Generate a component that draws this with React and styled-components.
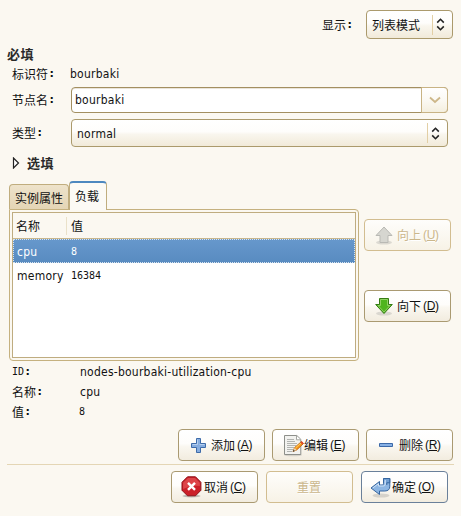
import React from "react";
import styled, { createGlobalStyle, css } from "styled-components";

const Global = createGlobalStyle`
  * { box-sizing: border-box; }
  body { margin: 0; background: #fbf8f1; }
`;

const cjk = css`font-family: "Noto Sans CJK SC", sans-serif; font-size: 12px;`;
const latin = css`font-family: "DejaVu Sans Condensed", "DejaVu Sans", sans-serif; font-stretch: condensed; font-size: 12px; letter-spacing: 0.24px;`;

const Dialog = styled.main`
  width: 461px;
  height: 516px;
  overflow: hidden;
  background: #fbf8f1;
  color: #111;
  display: flex;
  flex-direction: column;
  white-space: nowrap;
  ${cjk}
  line-height: 20px;
`;
const TopBar = styled.header`
  height: 29px;
  margin: 10px 8px 0 0;
  display: flex;
  justify-content: flex-end;
  align-items: center;
`;
const Label = styled.span`
  flex: none;
  width: ${(p) => p.$w}px;
  display: flex;
`;
const Colon = styled.span`
  font-family: "DejaVu Sans", sans-serif;
  font-weight: bold;
  font-size: 11px;
  margin-left: 1.5px;
`;
const Heading = styled.h2`
  margin: ${(p) => p.$m};
  height: 20px;
  line-height: 18px;
  font-size: 13px;
  letter-spacing: 0.6px;
  font-weight: 700;
  color: #2a2a2a;
  display: flex;
  align-items: center;
`;
const Disclosure = styled.svg`
  width: 8px;
  height: 12px;
  margin-right: 7px;
`;
const FormRow = styled.div`
  display: flex;
  align-items: center;
  height: ${(p) => p.$h}px;
  margin: ${(p) => p.$mt || 0}px 13px 0 12px;
`;
const Latin = styled.span`
  ${latin}
`;
const Digits = styled.span`
  font-family: "DejaVu Sans Mono", monospace;
  font-size: 10px;
`;
const Select = styled.div`
  width: ${(p) => p.$w}px;
  height: ${(p) => p.$h}px;
  padding: 0 7px 0 5px;
  border: 1px solid #ab9a6c;
  border-radius: 4px;
  background: linear-gradient(#fff, #fefdfb 45%, #f9f6ee 55%, #f1ead9);
  display: flex;
  align-items: center;
`;
const SelectText = styled.span`
  flex: 1;
`;
const SelectRule = styled.i`
  width: 1px;
  height: 20px;
  background: #e2cfa5;
  margin-right: 3px;
`;
const Arrows = styled.svg`
  width: 9px;
  height: 13px;
`;
const Entry = styled.div`
  width: 377px;
  height: 26px;
  border: 1px solid #a38f60;
  border-radius: 4px;
  background: #fff;
  box-shadow: inset 0 1px #e9e4da;
  display: flex;
  align-items: center;
  padding-left: 3px;
`;
const EntryText = styled(Latin)`
  flex: 1;
`;
const EntryButton = styled.div`
  width: 27px;
  height: 26px;
  margin-right: -1px;
  border: 1px solid #c8b384;
  border-radius: 0 4px 4px 0;
  background: linear-gradient(#fff, #fbf9f3 50%, #f4efdf);
  display: flex;
  align-items: center;
  justify-content: center;
`;
const Work = styled.section`
  display: flex;
  height: 180px;
  margin: 8px 10px 0 9px;
`;
const Notebook = styled.div`
  width: 350px;
`;
const Tabs = styled.div`
  height: 28px;
  display: flex;
  align-items: flex-end;
`;
const Tab = styled.div`
  border: 1px solid #c0ad7e;
  border-bottom: 0;
  border-radius: 4px 4px 0 0;
  height: 25px;
  width: 60px;
  padding-left: 5px;
  line-height: 25px;
  background: linear-gradient(#eee3cb, #e4d5b5);
  ${(p) => p.$active && css`
    height: 29px;
    width: 38px;
    margin-bottom: -1px;
    line-height: 25px;
    border-top: 2px solid #4d88c0;
    background: #fcfaf5;
    z-index: 1;
  `}
`;
const Pane = styled.div`
  height: 152px;
  border: 1px solid #c5b17f;
  border-radius: 0 4px 4px 4px;
  padding: 2px;
  background: #fbf8f1;
`;
const Tree = styled.div`
  height: 146px;
  border: 1px solid #bfac80;
  background: #fff;
`;
const TreeRow = styled.div`
  height: 24px;
  display: grid;
  grid-template-columns: 53px 1fr;
  align-items: center;
  padding: 1px 0 0 4px;
  column-gap: 1px;
  ${(p) => p.$selected && css`
    color: #fff;
    background: linear-gradient(#6798cc, #588bc0);
    outline: 1px dotted #d8e4ef;
    outline-offset: -1px;
  `}
`;
const TreeHead = styled(TreeRow)`
  height: 26px;
  padding: 0 0 0 3px;
  column-gap: 0;
  background: #fbf8f1;
  border-bottom: 1px solid #c9b78d;
`;
const HeadCell = styled.span`
  height: 18px;
  line-height: 18px;
  padding-left: ${(p) => (p.$ruled ? 4 : 0)}px;
  margin-left: ${(p) => (p.$ruled ? -3 : 0)}px;
  border-left: ${(p) => (p.$ruled ? "1px solid #eae1c9" : "0")};
`;
const SideButtons = styled.div`
  margin: 38px 0 0 5px;
  display: flex;
  flex-direction: column;
  gap: 39px;
`;
const Details = styled.dl`
  margin: 0 0 0 12px;
  padding-top: 1px;
  height: 68px;
`;
const Detail = styled.div`
  height: 20px;
  display: flex;
  align-items: center;
`;
const ButtonRow = styled.footer`
  display: flex;
  justify-content: flex-end;
  gap: ${(p) => p.$gap}px;
  margin-right: ${(p) => p.$right}px;
`;
const Rule = styled.hr`
  margin: 3px 7px 6px;
  border: 0;
  height: 1px;
  flex: none;
  background: #e4d6b5;
`;
const Button = styled.button`
  width: 87px;
  height: 32px;
  padding: 0 0 0 ${(p) => p.$pad}px;
  border: 1px solid ${(p) => (p.$primary ? "#6a809a" : p.$disabled ? "#d2bd90" : "#aa9a71")};
  border-radius: 4px;
  background: linear-gradient(#fff, #fefdfb 45%, #faf7f0 55%, #f2ecdf);
  color: ${(p) => (p.$disabled ? "#cbb78c" : "#111")};
  ${(p) => p.$disabled && css`
    background: linear-gradient(#fefdfb, #faf7ef 60%, #f7f2e6);
    text-shadow: 1px 1px #fff;
  `}
  ${cjk}
  display: flex;
  align-items: center;
`;
const Caption = styled.span`
  margin: -1px 0 0 ${(p) => p.$gap}px;
`;
const Key = styled.span`
  font-family: "Liberation Sans", sans-serif;
  font-size: 12px;
  letter-spacing: -0.3px;
  margin-left: 2px;
  u { text-underline-offset: 1px; text-decoration-thickness: 1px; }
`;
const Icon = styled.svg`
  flex: none;
  width: ${(p) => p.$w}px;
  height: ${(p) => p.$h || p.$w}px;
`;

const UpDown = () => (
  <Arrows viewBox="0 0 9 13" fill="none" stroke="#222" strokeWidth="1.6">
    <path d="M1.2 4.6 4.5 1.3l3.3 3.3M1.2 8.4l3.3 3.3 3.3-3.3" />
  </Arrows>
);

const ArrowIcon = ({ up }) => (
  <Icon $w={18} $h={19} viewBox="0 0 18 19">
    <ellipse cx="9" cy="16.5" rx="8" ry="2" fill="#777" opacity=".22" />
    {up ? (
      <path d="M9 1 17 9.5H13V16.5H5V9.5H1Z" fill="#d6d6d0" stroke="#b9b9b4" />
    ) : (
      <>
        <path d="M4.500 1.500h9v6h3.800L9 16.500.7 7.500h3.800Z" fill="#4fb51d" stroke="#357c13" />
        <path d="M5.500 2.500h7v6h2.500L9 15 3 8.500h2.500Z" fill="none" stroke="#8fd162" />
      </>
    )}
  </Icon>
);
const AddIcon = () => (
  <Icon $w={15} viewBox="0 0 15 15">
    <path d="M5.500.500h4v5h5v4h-5v5h-4v-5h-5v-4h5Z" fill="#86ade0" stroke="#3e6ba9" />
    <path d="M6.500 1.500v5h-5M8.500 6.500h5" fill="none" stroke="#b5cfef" />
  </Icon>
);
const RemoveIcon = () => (
  <Icon $w={15} $h={5} viewBox="0 0 15 5">
    <path d="M.500.500h13v3H.500Z" fill="#87b0e4" stroke="#3c69a8" />
  </Icon>
);
const EditIcon = () => (
  <Icon $w={21} $h={23} viewBox="0 0 21 23">
    <ellipse cx="10" cy="21" rx="9" ry="1.3" fill="#777" opacity=".25" />
    <path d="M1.500 1.500h12.300l4 3.800v15.200H1.500Z" fill="#f2f2ef" stroke="#8d8f8a" />
    <path d="M13.500 2v3.800h4" fill="#fff" stroke="#a5a7a2" />
    <path d="M4 5.500h7M4 7.500h8M4 9.500h10M4 11.500h9M4 13.500h7M4 15.500h6M4 17.500h5" stroke="#b2b4b1" />
    <path d="m10 17.500 1.500-3.800 7-6.200 2 2-6.800 6.400Z" fill="#f6981d" stroke="#bd5f0c" strokeWidth=".9" />
    <path d="m12.500 14 6-5.500" stroke="#ffd35a" />
    <path d="m10 17.500 1.500-3.500 2.200 2Z" fill="#ead6ad" />
    <path d="m9.700 17.800 1-2 1.200 1.100Z" fill="#333" />
    <path d="m17.300 8.500 1.600-1.300 1.800 2-1.400 1.200Z" fill="#df4a2f" />
  </Icon>
);
const CancelIcon = () => (
  <Icon $w={21} $h={22} viewBox="0 0 21 22">
    <ellipse cx="10.5" cy="20" rx="9" ry="1.5" fill="#555" opacity=".35" />
    <path d="M6.500.800h8l5.400 5.500v8l-5.400 5.500h-8L1 14.300v-8Z" fill="#cb2029" stroke="#8e1119" />
    <path d="M7 1.900h7l4.800 4.800v3.400Q10 9 2.100 13V6.700Z" fill="#e45557" opacity=".7" />
    <path d="m7 6.800 7 7m0-7-7 7" stroke="#fff" strokeWidth="2.400" />
  </Icon>
);
const OkIcon = () => (
  <Icon $w={21} $h={21} viewBox="0 0 21 21">
    <ellipse cx="11" cy="18.500" rx="8.500" ry="2" fill="#666" opacity=".22" />
    <path d="M13.500 1.500h6.300v7.700q0 4.800-5 4.800H9.500v3.500L1 11l8.500-6.500V8h2.800q1.200 0 1.200-1.200Z" fill="#8db6e3" stroke="#35659f" />
    <path d="M13.500 1.500h6.300v4.300h-3V8" fill="#719fd3" stroke="#35659f" />
    <path d="M8.500 6.700V9h5q1.800 0 1.800-2V3M2.800 11l5.700-4.300" fill="none" stroke="#cfe1f5" />
  </Icon>
);

const FieldLabel = ({ w, children }) => (
  <Label $w={w}>{children}<Colon>:</Colon></Label>
);
const ActionButton = ({ icon, pad, gap = 0, text, hotkey, ...rest }) => (
  <Button type="button" $pad={pad} {...rest}>
    {icon}
    <Caption $gap={gap}>{text}</Caption>
    {hotkey && <Key>(<u>{hotkey}</u>)</Key>}
  </Button>
);

export default function App() {
  return (
    <>
      <Global />
      <Dialog>
        <TopBar>
          <FieldLabel w={44}>显示</FieldLabel>
          <Select $w={87} $h={29}>
            <SelectText>列表模式</SelectText><SelectRule /><UpDown />
          </Select>
        </TopBar>
        <Heading $m="5px 0 0 7px">必填</Heading>
        <FormRow $h={20}>
          <FieldLabel w={58}>标识符</FieldLabel><Latin>bourbaki</Latin>
        </FormRow>
        <FormRow $h={26} $mt={3}>
          <FieldLabel w={59}>节点名</FieldLabel>
          <Entry>
            <EntryText>bourbaki</EntryText>
            <EntryButton>
              <Icon $w={12} $h={8} viewBox="0 0 12 8">
                <path d="m1 1.500 5 4.500 5-4.500" fill="none" stroke="#cdb789" strokeWidth="1.800" />
              </Icon>
            </EntryButton>
          </Entry>
        </FormRow>
        <FormRow $h={28} $mt={6}>
          <FieldLabel w={59}>类型</FieldLabel>
          <Select $w={377} $h={28}>
            <SelectText><Latin>normal</Latin></SelectText><SelectRule /><UpDown />
          </Select>
        </FormRow>
        <Heading $m="6px 0 0 12px">
          <Disclosure viewBox="0 0 8 12">
            <path d="M1.500 1v10L6.500 6Z" fill="#fff" stroke="#222" strokeWidth="1.200" />
          </Disclosure>
          选填
        </Heading>
        <Work>
          <Notebook>
            <Tabs>
              <Tab>实例属性</Tab>
              <Tab $active>负载</Tab>
            </Tabs>
            <Pane>
              <Tree>
                <TreeHead><HeadCell>名称</HeadCell><HeadCell $ruled>值</HeadCell></TreeHead>
                <TreeRow $selected><Latin>cpu</Latin><Digits>8</Digits></TreeRow>
                <TreeRow><Latin>memory</Latin><Digits>16384</Digits></TreeRow>
              </Tree>
            </Pane>
          </Notebook>
          <SideButtons>
            <ActionButton icon={<ArrowIcon up />} pad={10} gap={4} text="向上" hotkey="U" $disabled />
            <ActionButton icon={<ArrowIcon />} pad={10} gap={4} text="向下" hotkey="D" />
          </SideButtons>
        </Work>
        <Details>
          <Detail><Label $w={68}><Digits>ID</Digits><Colon>:</Colon></Label><Latin>nodes-bourbaki-utilization-cpu</Latin></Detail>
          <Detail><FieldLabel w={68}>名称</FieldLabel><Latin>cpu</Latin></Detail>
          <Detail><FieldLabel w={67}>值</FieldLabel><Digits>8</Digits></Detail>
        </Details>
        <ButtonRow $gap={7} $right={8}>
          <ActionButton icon={<AddIcon />} pad={12} gap={5} text="添加" hotkey="A" />
          <ActionButton icon={<EditIcon />} pad={10} text="编辑" hotkey="E" />
          <ActionButton icon={<RemoveIcon />} pad={12} gap={5} text="删除" hotkey="R" />
        </ButtonRow>
        <Rule />
        <ButtonRow $gap={8} $right={13}>
          <ActionButton icon={<CancelIcon />} pad={9} gap={2} text="取消" hotkey="C" />
          <ActionButton pad={30} text="重置" $disabled />
          <ActionButton icon={<OkIcon />} pad={8} gap={1} text="确定" hotkey="O" $primary />
        </ButtonRow>
      </Dialog>
    </>
  );
}
